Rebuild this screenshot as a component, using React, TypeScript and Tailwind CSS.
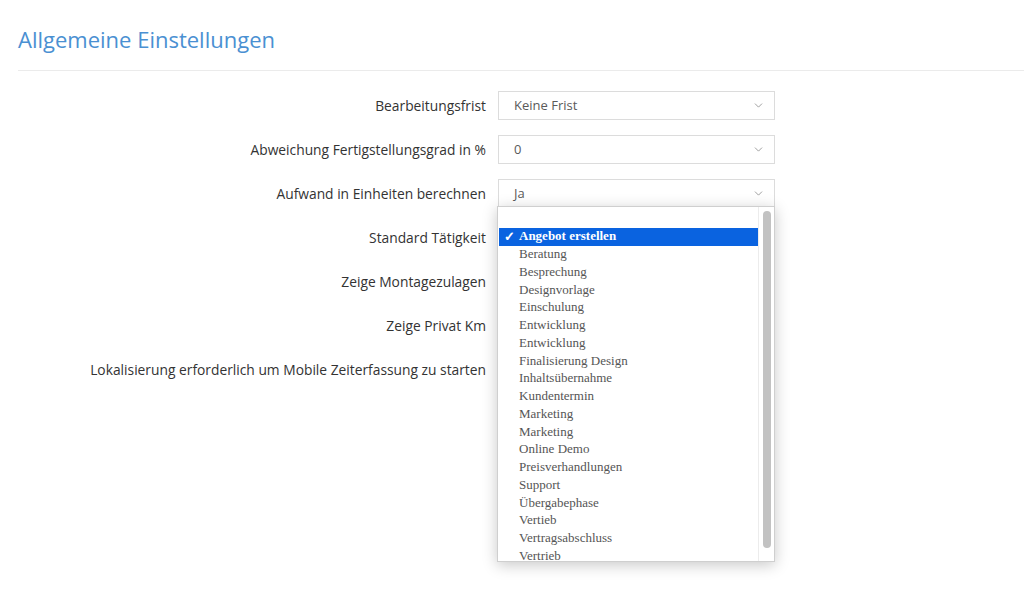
import { ChevronDown } from "lucide-react";

const options = [
  "Angebot erstellen",
  "Beratung",
  "Besprechung",
  "Designvorlage",
  "Einschulung",
  "Entwicklung",
  "Entwicklung",
  "Finalisierung Design",
  "Inhaltsübernahme",
  "Kundentermin",
  "Marketing",
  "Marketing",
  "Online Demo",
  "Preisverhandlungen",
  "Support",
  "Übergabephase",
  "Vertieb",
  "Vertragsabschluss",
  "Vertrieb",
];

function SelectBox({ value, focused }: { value: string; focused?: boolean }) {
  return (
    <div
      className={`flex h-[29px] w-[277px] items-center justify-between border bg-white pl-[15px] pr-[9px] text-[13px] text-[#5a5a5a] ${
        focused ? "border-[#e8a46a]" : "border-[#dcdcdc]"
      }`}
    >
      <span>{value}</span>
      <ChevronDown className="h-[13px] w-[13px] text-[#8a8a8a]" strokeWidth={1.5} />
    </div>
  );
}

const rows: { label: string; value?: string; focused?: boolean }[] = [
  { label: "Bearbeitungsfrist", value: "Keine Frist" },
  { label: "Abweichung Fertigstellungsgrad in %", value: "0" },
  { label: "Aufwand in Einheiten berechnen", value: "Ja" },
  { label: "Standard Tätigkeit", value: "", focused: true },
  { label: "Zeige Montagezulagen" },
  { label: "Zeige Privat Km" },
  { label: "Lokalisierung erforderlich um Mobile Zeiterfassung zu starten" },
];

export default function App() {
  return (
    <div className="relative min-h-[591px] w-full bg-white font-['Open_Sans',sans-serif]">
      <div className="pl-[18px]">
        <div className="border-b border-[#ebebeb] pt-[25px] pb-[16px]">
          <h1 className="text-[22px] leading-[29px] text-[#4a90d2]">Allgemeine Einstellungen</h1>
        </div>

        <div className="mt-[20px] grid grid-cols-[468px_277px] gap-x-[12px] gap-y-[15px]">
          {rows.map((row) => (
            <div key={row.label} className="contents">
              <div className="flex h-[29px] items-center justify-end pt-[1px] text-[13.8px] text-[#333]">{row.label}</div>
              <div>{row.value !== undefined && <SelectBox value={row.value} focused={row.focused} />}</div>
            </div>
          ))}
        </div>
      </div>

      {/* open native select popup */}
      <div className="absolute left-[497px] top-[206px] flex h-[356px] w-[278px] border border-[#cfcfcf] bg-white shadow-[0_3px_14px_rgba(0,0,0,0.22)]">
        <div className="flex-1 overflow-hidden pl-[1px] pt-[3px] font-['Liberation_Serif',serif] text-[13px] text-[#555]">
          <div className="h-[18px]" />
          {options.map((opt, i) => (
            <div
              key={i}
              className={`flex h-[17.75px] items-center leading-none ${
                i === 0 ? "bg-[#0a63e0] font-bold text-white" : ""
              }`}
            >
              <span className="w-[20px] pl-[5px] text-[13px]">{i === 0 ? "✓" : ""}</span>
              <span className="-mt-[2px]">{opt}</span>
            </div>
          ))}
        </div>
        <div className="w-[16px] border-l border-[#ececec] py-[4px]">
          <div className="mx-auto h-[337px] w-[8px] rounded-full bg-[#c2c2c2]" />
        </div>
      </div>
    </div>
  );
}
